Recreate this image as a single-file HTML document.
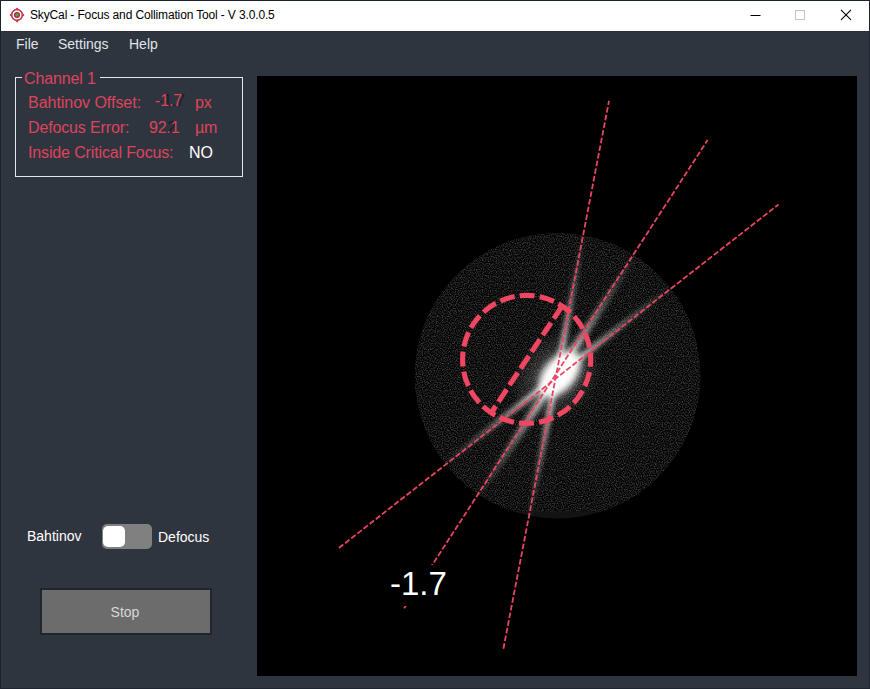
<!DOCTYPE html>
<html>
<head>
<meta charset="utf-8">
<title>SkyCal - Focus and Collimation Tool</title>
<style>
  html, body { margin: 0; padding: 0; }
  body {
    width: 870px; height: 689px; overflow: hidden; position: relative;
    background: #2f353f;
    font-family: "Liberation Sans", sans-serif;
    -webkit-font-smoothing: antialiased;
  }
  .abs { position: absolute; white-space: nowrap; line-height: 1; }
  /* window frame */
  #frame-l { left: 0; top: 0; width: 1px; height: 689px; background: #1b232f; }
  #frame-t { left: 0; top: 0; width: 870px; height: 1px; background: #1b232f; }
  #frame-r { left: 869px; top: 0; width: 1px; height: 689px; background: #1d2430; }
  #frame-b { left: 0; top: 688px; width: 870px; height: 1px; background: #1f2631; }
  /* title bar */
  #titlebar { left: 1px; top: 1px; width: 868px; height: 30px; background: #ffffff; border-bottom: 1px solid #292e38; }
  #title { left: 30px; top: 9px; font-size: 12px; color: #000; letter-spacing: -0.14px; }
  /* menu */
  .menu { top: 37px; font-size: 14px; color: #dfe3e9; }
  /* group box */
  #group { left: 15px; top: 77px; width: 226px; height: 98px; border: 1px solid #e4e7ec; }
  #legend { left: 22px; top: 68px; width: 78px; height: 18px; background: #2f353f; }
  .red { color: #df435b; }
  .t16 { font-size: 16px; letter-spacing: -0.14px; }
  .t14 { font-size: 14px; color: #ffffff; }
  /* toggle */
  #toggle { left: 101.5px; top: 524px; width: 50px; height: 25px; border-radius: 5px; background: #808080; }
  #knob { left: 103.2px; top: 526px; width: 21.4px; height: 21px; border-radius: 5px; background: #ffffff; }
  /* button */
  #stop { left: 40px; top: 588px; width: 168px; height: 43px; border: 2px solid #21252c; background: #6c6c6c; }
  #stoptxt { left: 39px; width: 172px; top: 605px; text-align: center; font-size: 14px; color: #d6d6d6; }
  /* image view */
  #view { left: 257px; top: 76px; width: 600px; height: 600px; background: #000; }
</style>
</head>
<body>
  <div class="abs" id="titlebar"></div>
  <svg class="abs" style="left:8.85px;top:6.85px" width="16" height="16" viewBox="0 0 16 16">
    <circle cx="8" cy="8" r="5.4" fill="none" stroke="#b8264a" stroke-width="1.5"/>
    <circle cx="8" cy="2.1" r="1.3" fill="#e8304f"/><circle cx="8" cy="13.9" r="1.3" fill="#e8304f"/>
    <circle cx="2.1" cy="8" r="1.3" fill="#e8304f"/><circle cx="13.9" cy="8" r="1.3" fill="#e8304f"/>
    <circle cx="8" cy="8" r="3.05" fill="#a32b36"/>
    <circle cx="8" cy="8" r="1.75" fill="#5fa643"/>
  </svg>
  <div class="abs" id="title">SkyCal - Focus and Collimation Tool - V 3.0.0.5</div>
  <svg class="abs" style="left:740px;top:1px" width="129" height="30" viewBox="0 0 129 30">
    <path d="M10.5 14.5H20.5" stroke="#000" stroke-width="1"/>
    <rect x="55.5" y="9.5" width="9" height="9" fill="none" stroke="#c4c4c4" stroke-width="1"/>
    <path d="M101 8.9L111 18.9M111 8.9L101 18.9" stroke="#000" stroke-width="1.1"/>
  </svg>

  <div class="abs menu" style="left:16px">File</div>
  <div class="abs menu" style="left:58px">Settings</div>
  <div class="abs menu" style="left:129px">Help</div>

  <div class="abs" id="group"></div>
  <div class="abs" id="legend"></div>
  <div class="abs red t16" style="left:24px;top:71px">Channel 1</div>
  <div class="abs red t16" style="left:28px;top:95px;letter-spacing:-0.03px">Bahtinov Offset:</div>
  <div class="abs red t16" style="left:28px;top:120px">Defocus Error:</div>
  <div class="abs red t16" style="left:28px;top:145px">Inside Critical Focus:</div>
  <div class="abs t16" style="left:158px;top:93px;color:#1c2027">-1.7</div>
  <div class="abs red t16" style="left:155px;top:93px">-1.7</div>
  <div class="abs t16" style="left:167.5px;top:120px;color:#1c2027">2</div>
  <div class="abs red t16" style="left:149px;top:120px">92.1</div>
  <div class="abs red t16" style="left:195px;top:95px">px</div>
  <div class="abs red t16" style="left:195px;top:120px">µm</div>
  <div class="abs t16" style="left:189px;top:145px;color:#fff">NO</div>

  <div class="abs t14" style="left:27px;top:529px">Bahtinov</div>
  <div class="abs" id="toggle"></div>
  <div class="abs" id="knob"></div>
  <div class="abs t14" style="left:158px;top:530px">Defocus</div>

  <div class="abs" id="stop"></div>
  <div class="abs" id="stoptxt">Stop</div>

  <div class="abs" id="view">
    <svg width="600" height="600" viewBox="257 76 600 600" style="display:block">
      <rect x="257" y="76" width="600" height="600" fill="#000"/>
      <defs>
        <filter id="grain" x="0" y="0" width="100%" height="100%" color-interpolation-filters="sRGB">
          <feTurbulence type="fractalNoise" baseFrequency="0.85" numOctaves="1" seed="7" result="n"/>
          <feColorMatrix in="n" type="matrix" values="0.62 0 0 0 -0.235  0.62 0 0 0 -0.235  0.62 0 0 0 -0.235  0 0 0 0 1" result="g"/>
          <feComposite in="g" in2="SourceAlpha" operator="in"/>
        </filter>
        <filter id="b15" x="-50%" y="-50%" width="200%" height="200%"><feGaussianBlur stdDeviation="1.6"/></filter>
        <filter id="b3" x="-50%" y="-50%" width="200%" height="200%"><feGaussianBlur stdDeviation="3.5"/></filter>
        <radialGradient id="spk" cx="0.5" cy="0.5" r="0.5">
          <stop offset="0" stop-color="#fff" stop-opacity="0.95"/>
          <stop offset="0.25" stop-color="#fff" stop-opacity="0.6"/>
          <stop offset="0.6" stop-color="#fff" stop-opacity="0.24"/>
          <stop offset="0.9" stop-color="#fff" stop-opacity="0.07"/>
          <stop offset="1" stop-color="#fff" stop-opacity="0"/>
        </radialGradient>
        <radialGradient id="halo" cx="0.5" cy="0.5" r="0.5">
          <stop offset="0" stop-color="#fff" stop-opacity="0.6"/>
          <stop offset="0.45" stop-color="#fff" stop-opacity="0.16"/>
          <stop offset="1" stop-color="#fff" stop-opacity="0"/>
        </radialGradient>
      </defs>
      <circle cx="557.6" cy="375.7" r="142.8" fill="#131313"/>
      <clipPath id="roi"><rect x="400" y="200" width="320" height="311.6"/></clipPath>
      <clipPath id="disc"><circle cx="557.6" cy="375.7" r="142.8"/></clipPath>
      <g clip-path="url(#roi)"><circle cx="557.6" cy="375.7" r="142.8" fill="#222222" filter="url(#grain)"/></g>
      <g clip-path="url(#disc)"><g transform="translate(556.5 376.2)">
        <ellipse rx="52" ry="40" fill="url(#halo)" transform="rotate(-46)"/>
        <g filter="url(#b15)">
          <ellipse rx="150" ry="6" fill="url(#spk)" transform="rotate(100.9)"/>
          <ellipse rx="150" ry="7" fill="url(#spk)" transform="rotate(123)"/>
          <ellipse rx="150" ry="6" fill="url(#spk)" transform="rotate(142)"/>
        </g>
        <g transform="translate(3.5 -2.2) rotate(-50)"><ellipse rx="26.5" ry="15.5" fill="#fff" filter="url(#b3)"/></g>
      </g></g>
      <g stroke="#f04662" fill="none">
        <g stroke-width="1.8" stroke-dasharray="5.6 2.2" stroke-dashoffset="1.5" stroke="#ea4560">
          <line x1="609" y1="100.9" x2="503" y2="650.8"/>
          <line x1="707.6" y1="140.1" x2="403" y2="610"/>
          <line x1="778.5" y1="204.5" x2="337.1" y2="549.4"/>
        </g>
        <g stroke-width="5.1">
          <circle cx="526.65" cy="359.4" r="64.05" stroke-dasharray="15 5.122" stroke-dashoffset="7.5"/>
          <line x1="562.1" y1="306.06" x2="491.2" y2="412.74" stroke-dasharray="15 5"/>
        </g>
      </g>
      <rect x="380" y="565" width="80" height="41" fill="#000"/>
      <text x="390" y="594.8" font-family="Liberation Sans, sans-serif" font-size="33" fill="#fff">-1.7</text>
    </svg>
  </div>

  <div class="abs" id="frame-l"></div>
  <div class="abs" id="frame-t"></div>
  <div class="abs" id="frame-r"></div>
  <div class="abs" id="frame-b"></div>
</body>
</html>
